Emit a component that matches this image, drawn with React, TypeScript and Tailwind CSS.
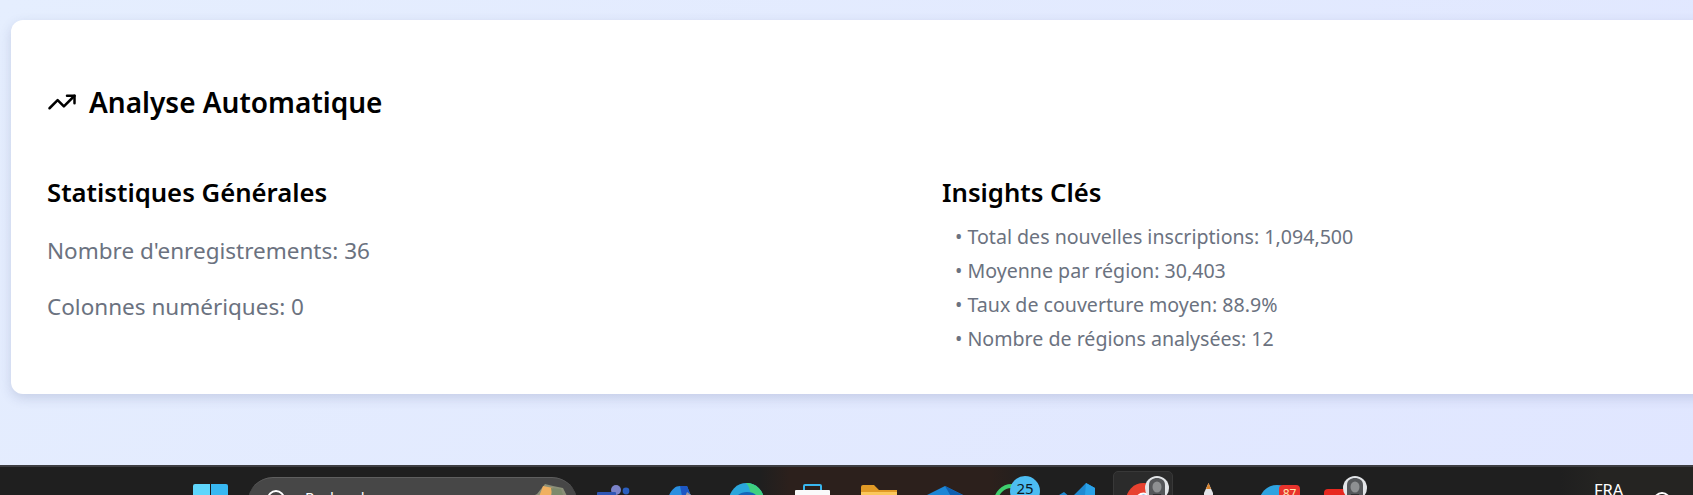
import { TrendingUp } from "lucide-react";

const INSIGHTS = [
  "Total des nouvelles inscriptions: 1,094,500",
  "Moyenne par région: 30,403",
  "Taux de couverture moyen: 88.9%",
  "Nombre de régions analysées: 12",
];

function Avatar({ className }: { className: string }) {
  return (
    <svg width="24" height="24" viewBox="0 0 24 24" className={className}>
      <circle cx="12" cy="12" r="12" fill="#e3e5e8" />
      <path d="M4 24V9c0-5 4-7 8-7s8 2 8 7v15z" fill="#55575a" />
      <ellipse cx="12" cy="11" rx="4.500" ry="5.500" fill="#8e9092" />
      <path d="M7 24l1-6h8l1 6z" fill="#2f3032" />
    </svg>
  );
}

function Taskbar() {
  return (
    <footer className="h-[30px] shrink-0 overflow-hidden border-t-2 border-[#3e3e42] bg-[linear-gradient(90deg,#1f1f1f_0,#1f1f1f_760px,#2c201c_790px,#2c201c_990px,#1f1f1f_1040px,#1f1f1f_1560px,#252422_1600px)]">
      <div className="flex h-[60px] items-start">
        {/* start button */}
        <div className="ml-[193px] mt-[17px] grid h-[36px] w-[35px] shrink-0 grid-cols-2 gap-[1px]">
          <span className="rounded-tl-[2px] bg-[#5fd6fc]" />
          <span className="rounded-tr-[2px] bg-[#38b8f2]" />
          <span className="bg-[#2aa0e8]" />
          <span className="bg-[#1c8ade]" />
        </div>

        {/* search */}
        <div className="relative ml-[20px] mt-[10px] flex h-[50px] w-[329px] shrink-0 items-start rounded-[25px] border-t border-[#5f5f5f] bg-[#474747] pl-[19px] pt-[12px]">
          <span className="h-[18px] w-[18px] shrink-0 rounded-full border-2 border-white" />
          <span className="ml-[20px] mt-[-3px] text-[15px] leading-5 text-white">Rechercher</span>
          <svg width="48" height="22" viewBox="0 0 48 22" className="absolute right-[6px] top-[4px]">
            <path d="M2 18l12-6 8-10 8 2 10 2 6 12v4H2z" fill="#8b8f78" />
            <path d="M14 20l6-16 10 2-4 14z" fill="#f0b060" />
            <path d="M28 6l10 1 4 12H30z" fill="#7d8a6c" />
            <path d="M40 14l6 2v4h-6z" fill="#c8703a" />
          </svg>
        </div>

        {/* pinned apps */}
        <svg width="33" height="24" viewBox="0 0 33 24" className="ml-[20px] mt-[18px] shrink-0">
          <circle cx="19" cy="5" r="5" fill="#7b83c9" />
          <circle cx="29" cy="6" r="3.4" fill="#2a5fc0" />
          <rect x="0" y="7" width="19" height="17" rx="1" fill="#2f56b4" />
        </svg>
        <svg width="28" height="24" viewBox="0 0 28 24" className="ml-[36px] mt-[19px] shrink-0">
          <path d="M0 20C2 8 7 0 14 0h7l4 10H11L6 24H0z" fill="#2a8fe0" />
          <path d="M14 0h7l4 10h-9z" fill="#1d57c4" />
          <path d="M21 6l7 5h-9z" fill="#9a9aa0" />
        </svg>
        <svg width="35" height="26" viewBox="0 0 35 26" className="ml-[35px] mt-[16px] shrink-0">
          <circle cx="17.5" cy="17.5" r="17.5" fill="#2aa6dc" />
          <path d="M17 0a17.5 17.5 0 0 1 18 17.5H22C22 8 20 3 17 0z" fill="#3fd07f" />
          <path d="M5 18c2-6 7-9 13-9s9 2 11 6c-6-2-16-2-24 3z" fill="#1565b8" />
        </svg>
        <svg width="35" height="26" viewBox="0 0 35 26" className="ml-[31px] mt-[17px] shrink-0">
          <path d="M9 6V2a1 1 0 0 1 1-1h15a1 1 0 0 1 1 1v4" fill="none" stroke="#39b6ee" strokeWidth="2" />
          <rect x="0" y="6" width="35" height="20" rx="1" fill="#fafafa" />
        </svg>
        <svg width="36" height="26" viewBox="0 0 36 26" className="ml-[31px] mt-[18px] shrink-0">
          <path d="M0 2a2 2 0 0 1 2-2h11l5 5h18v21H0z" fill="#e19a26" />
          <path d="M0 7h36v19H0z" fill="#fbc75c" />
        </svg>
        <svg width="36" height="24" viewBox="0 0 36 24" className="ml-[30px] mt-[19px] shrink-0">
          <path d="M0 9L18 0l18 9v15H0z" fill="#1c86d6" />
          <path d="M18 0l18 9-10 5z" fill="#0f5fb0" />
        </svg>

        {/* whatsapp with unread count */}
        <div className="relative ml-[31px] mt-[17px] h-[36px] w-[35px] shrink-0">
          <span className="block h-[35px] w-[35px] rounded-full border-[4px] border-[#3fcf6e]" />
          <span className="absolute left-[16px] top-[-8px] flex h-[30px] w-[30px] justify-center rounded-full bg-[#4dbdf2] pt-[2px] text-[15px] leading-[20px] text-[#0c1a24]">
            25
          </span>
        </div>

        <svg width="36" height="26" viewBox="0 0 36 26" className="ml-[30px] mt-[16px] shrink-0">
          <path d="M0 12l5-3 7 6L27 0l9 5v21H26V12L13 24l-5-4-4 4-4-2z" fill="#1f8ad2" />
          <path d="M27 0l9 5v21H26V12z" fill="#2aa2e8" />
        </svg>

        {/* active app */}
        <div className="relative ml-[18px] mt-[4px] h-[50px] w-[60px] shrink-0 rounded-[5px] border border-[#383838] bg-[#2b2b2b]">
          <svg width="35" height="35" viewBox="0 0 35 35" className="absolute left-[12px] top-[11px]">
            <circle cx="17.5" cy="17.5" r="17.5" fill="#e8412f" />
            <circle cx="17.5" cy="17.5" r="8" fill="#fff" />
            <circle cx="17.5" cy="17.5" r="6" fill="#3c9ae8" />
          </svg>
          <Avatar className="absolute left-[31px] top-[4px]" />
        </div>

        <svg width="9" height="24" viewBox="0 0 9 24" className="ml-[31px] mt-[16px] shrink-0">
          <path d="M4.500 0L9 10v14H0V10z" fill="#e4e4e8" />
          <path d="M4.500 0L7 6H2z" fill="#d9822b" />
        </svg>

        {/* chat with unread count */}
        <div className="relative ml-[46px] mt-[18px] h-[36px] w-[41px] shrink-0">
          <span className="block h-[36px] w-[36px] rounded-full bg-[#2ea3e0]" />
          <span className="absolute left-[20px] top-0 h-[20px] w-[21px] rounded-[4px] bg-[#e8332c] text-center text-[12px] leading-[17px] text-[#ffe9b0]">
            87
          </span>
        </div>

        <div className="relative ml-[24px] mt-[9px] h-[40px] w-[43px] shrink-0">
          <span className="absolute left-0 top-[13px] h-[26px] w-[37px] rounded-[4px] bg-[#e8281f]" />
          <Avatar className="absolute left-[19px] top-0" />
        </div>

        {/* system tray */}
        <span className="ml-[227px] mt-[13px] text-[16.5px] leading-5 text-white">FRA</span>
        <span className="ml-[30px] mt-[25px] h-[18px] w-[18px] shrink-0 rounded-full border-2 border-white" />
      </div>
    </footer>
  );
}

export default function App() {
  return (
    <div className="flex h-[495px] flex-col overflow-hidden bg-[linear-gradient(135deg,#e5eefe,#e0e6ff)] font-['Noto_Sans',sans-serif]">
      <main className="min-h-0 flex-1 pl-[11px] pt-[20px]">
        <section className="h-[374px] w-[1830px] rounded-[12px] bg-white px-[36px] pt-[59px] shadow-[0_4px_12px_rgba(60,70,120,0.18)]">
          <h2 className="flex h-[46px] items-center gap-[12px] text-[28px] font-semibold leading-[46px] text-black">
            <TrendingUp size={30} strokeWidth={2} />
            Analyse Automatique
          </h2>
          <div className="mt-[47px] grid grid-cols-2 gap-[32px]">
            <div>
              <h3 className="text-[25.7px] font-semibold leading-[42px] text-black">Statistiques Générales</h3>
              <p className="mt-[19px] text-[22.5px] leading-[36px] text-[#6b7280]">Nombre d'enregistrements: 36</p>
              <p className="mt-[20px] text-[22.5px] leading-[36px] text-[#6b7280]">Colonnes numériques: 0</p>
            </div>
            <div>
              <h3 className="text-[25.7px] font-semibold leading-[42px] text-black">Insights Clés</h3>
              <ul className="mt-[6px] pl-[13px] text-[19.6px] leading-[34px] text-[#6b7280]">
                {INSIGHTS.map((item) => (
                  <li key={item}>• {item}</li>
                ))}
              </ul>
            </div>
          </div>
        </section>
      </main>
      <Taskbar />
    </div>
  );
}
